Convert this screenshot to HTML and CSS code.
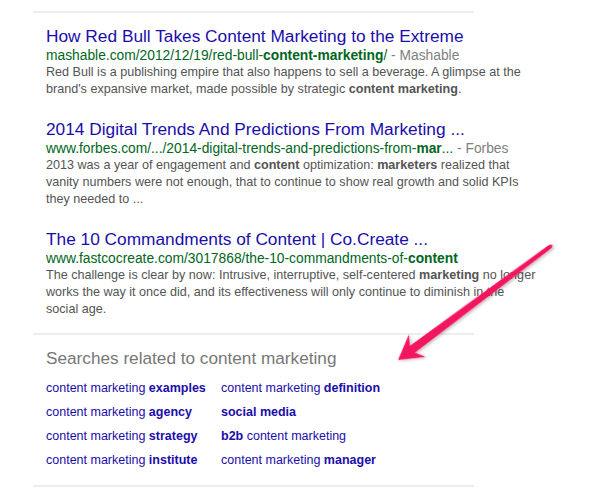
FILE: index.html
```html
<!DOCTYPE html>
<html>
<head>
<meta charset="utf-8">
<link rel="stylesheet" href="styles.css">
</head>
<body>
<div class="page">
  <div class="results">
    <div class="result">
      <a class="title" href="#">How Red Bull Takes Content Marketing to the Extreme</a>
      <div class="url">mashable.com/2012/12/19/red-bull-<b>content-marketing</b>/<span class="src"> - Mashable</span></div>
      <div class="snippet">Red Bull is a publishing empire that also happens to sell a beverage. A glimpse at the brand's expansive market, made possible by strategic <b>content marketing</b>.</div>
    </div>
    <div class="result">
      <a class="title" href="#">2014 Digital Trends And Predictions From Marketing ...</a>
      <div class="url">www.forbes.com/.../2014-digital-trends-and-predictions-from-<b>mar</b>...<span class="src"> - Forbes</span></div>
      <div class="snippet">2013 was a year of engagement and <b>content</b> optimization: <b>marketers</b> realized that vanity numbers were not enough, that to continue to show real growth and solid KPIs they needed to ...</div>
    </div>
    <div class="result">
      <a class="title" href="#">The 10 Commandments of Content | Co.Create ...</a>
      <div class="url">www.fastcocreate.com/3017868/the-10-commandments-of-<b>content</b></div>
      <div class="snippet">The challenge is clear by now: Intrusive, interruptive, self-centered <b>marketing</b> no longer works the way it once did, and its effectiveness will only continue to diminish in the<br>social age.</div>
    </div>
  </div>
  <div class="related">
    <h3 class="related-head">Searches related to content marketing</h3>
    <div class="related-grid">
      <a href="#">content marketing <b>examples</b></a>
      <a href="#">content marketing <b>definition</b></a>
      <a href="#">content marketing <b>agency</b></a>
      <a href="#"><b>social media</b></a>
      <a href="#">content marketing <b>strategy</b></a>
      <a href="#"><b>b2b</b> content marketing</a>
      <a href="#">content marketing <b>institute</b></a>
      <a href="#">content marketing <b>manager</b></a>
    </div>
  </div>
</div>
<svg class="arrow" width="600" height="498" viewBox="0 0 600 498">
  <defs>
    <filter id="sh" x="-20%" y="-20%" width="140%" height="140%">
      <feDropShadow dx="1" dy="2" stdDeviation="1.5" flood-color="#000" flood-opacity="0.25"/>
    </filter>
  </defs>
  <g transform="translate(398 360) rotate(-36.7)" filter="url(#sh)">
    <polygon fill="#f3175f" points="0,0 24,-14 18,-4.3 190,-2 193,0 190,2 18,4.3 24,14"/>
  </g>
</svg>
</body>
</html>
```
FILE: styles.css
```css
html, body {
  margin: 0;
  padding: 0;
  background: #fff;
}
body {
  font-family: Arial, "Liberation Sans", Helvetica, sans-serif;
  width: 600px;
  height: 498px;
  overflow: hidden;
  position: relative;
}
.page {
  margin: 11px 0 0 33px;
  width: 441px;
}
.results {
  border-top: 2px solid #eeeeee;
  padding: 12px 0 15px 13px;
  border-bottom: 2px solid #eeeeee;
}
.result {
  margin-bottom: 20px;
}
.result:last-child {
  margin-bottom: 0;
}
.title {
  display: block;
  font-size: 17.3px;
  line-height: 22px;
  color: #1a0dab;
  text-decoration: none;
  white-space: nowrap;
}
.url {
  font-size: 13.8px;
  line-height: 17px;
  color: #006621;
  white-space: nowrap;
}
.url b {
  font-weight: bold;
}
.url .src {
  color: #808080;
}
.snippet {
  font-size: 12.6px;
  line-height: 17px;
  color: #545454;
  width: 495px;
}
.snippet b {
  color: #545454;
  font-weight: bold;
}
.related {
  padding: 13px 0 13px 13px;
  border-bottom: 2px solid #eeeeee;
}
.related-head {
  margin: 0 0 7px 0;
  font-size: 17.2px;
  line-height: 21px;
  font-weight: normal;
  color: #777777;
}
.related-grid {
  display: grid;
  grid-template-columns: 175px auto;
  grid-auto-rows: 24px;
  align-items: center;
}
.related-grid a {
  font-size: 12.5px;
  color: #1a0dab;
  text-decoration: none;
  white-space: nowrap;
}
.arrow {
  position: absolute;
  left: 0;
  top: 0;
  pointer-events: none;
}
```
